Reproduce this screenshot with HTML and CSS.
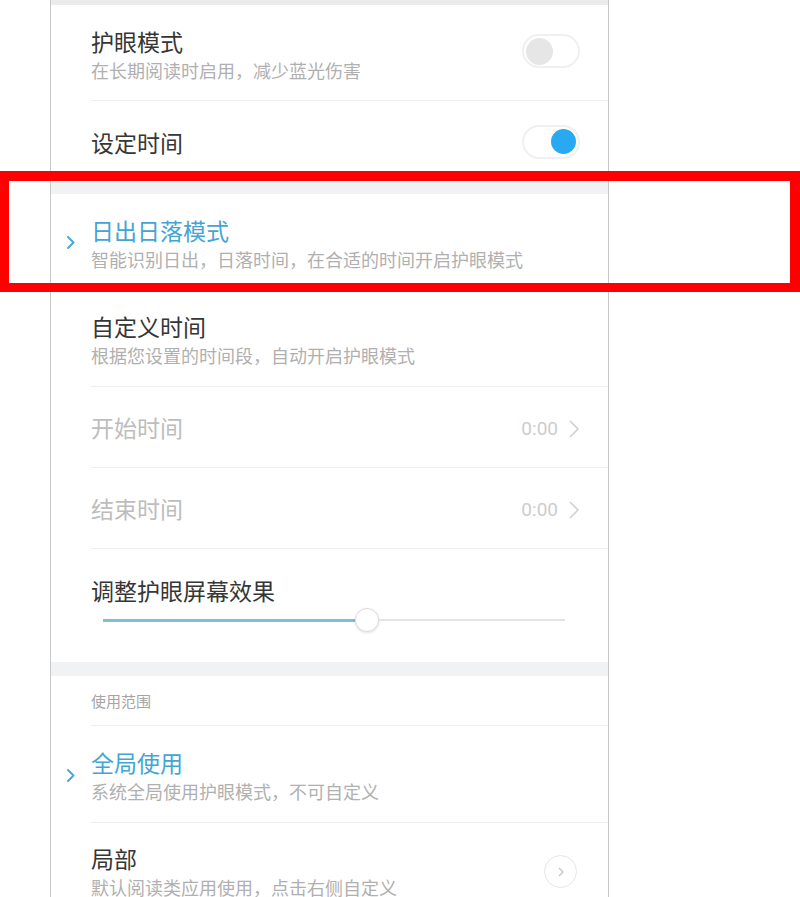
FILE: index.html
```html
<!DOCTYPE html>
<html lang="zh-CN">
<head>
<meta charset="utf-8">
<title>护眼模式</title>
<link rel="stylesheet" href="styles.css">
</head>
<body>
<div class="page">
  <div class="panel">
    <div class="band band-top"></div>

    <div class="row row-two row-a">
      <div class="text">
        <div class="title">护眼模式</div>
        <div class="sub">在长期阅读时启用，减少蓝光伤害</div>
      </div>
      <span class="switch"><span class="knob"></span></span>
    </div>

    <div class="row row-one row-b no-line">
      <div class="title">设定时间</div>
      <span class="switch on"><span class="knob"></span></span>
    </div>

    <div class="band band-mid"></div>

    <div class="row row-two row-a">
      <span class="pick"><svg width="10" height="15" viewBox="0 0 10 15"><polyline points="2,2 7.5,7.5 2,13" fill="none" stroke="#4aa8d8" stroke-width="2" stroke-linecap="round" stroke-linejoin="round"/></svg></span>
      <div class="text">
        <div class="title blue">日出日落模式</div>
        <div class="sub">智能识别日出，日落时间，在合适的时间开启护眼模式</div>
      </div>
    </div>

    <div class="row row-two row-c">
      <div class="text">
        <div class="title">自定义时间</div>
        <div class="sub">根据您设置的时间段，自动开启护眼模式</div>
      </div>
    </div>

    <div class="row row-one row-d">
      <div class="title dim">开始时间</div>
      <span class="value">0:00<svg width="12" height="20" viewBox="0 0 12 20"><polyline points="2,2 10,10 2,18" fill="none" stroke="#cfcfcf" stroke-width="1.6" stroke-linejoin="round"/></svg></span>
    </div>

    <div class="row row-one row-d">
      <div class="title dim">结束时间</div>
      <span class="value">0:00<svg width="12" height="20" viewBox="0 0 12 20"><polyline points="2,2 10,10 2,18" fill="none" stroke="#cfcfcf" stroke-width="1.6" stroke-linejoin="round"/></svg></span>
    </div>

    <div class="row row-slider no-line">
      <div class="title">调整护眼屏幕效果</div>
      <div class="slider">
        <div class="fill" style="width:252px"></div>
        <span class="thumb"></span>
        <div class="rest"></div>
      </div>
    </div>

    <div class="band band-low"></div>

    <div class="row row-head">
      <div class="head">使用范围</div>
    </div>

    <div class="row row-two row-c">
      <span class="pick"><svg width="10" height="15" viewBox="0 0 10 15"><polyline points="2,2 7.5,7.5 2,13" fill="none" stroke="#4aa8d8" stroke-width="2" stroke-linecap="round" stroke-linejoin="round"/></svg></span>
      <div class="text">
        <div class="title blue">全局使用</div>
        <div class="sub">系统全局使用护眼模式，不可自定义</div>
      </div>
    </div>

    <div class="row row-two row-e no-line">
      <div class="text text-e">
        <div class="title">局部</div>
        <div class="sub">默认阅读类应用使用，点击右侧自定义</div>
      </div>
      <span class="circle"><svg width="10" height="14" viewBox="0 0 10 14"><polyline points="3,3 7,7 3,11" fill="none" stroke="#c8c8c8" stroke-width="1.4" stroke-linejoin="round"/></svg></span>
    </div>
  </div>
  <div class="highlight"></div>
</div>
</body>
</html>
```

FILE: styles.css
```css
* { box-sizing: border-box; }

html, body {
  margin: 0;
  padding: 0;
  background: #ffffff;
  height: 897px;
  overflow: hidden;
}

body {
  font-family: "Noto Sans CJK SC", "Noto Sans", sans-serif;
  color: #3b3b3b;
}

.page {
  position: relative;
  width: 800px;
  height: 897px;
  overflow: hidden;
}

.panel {
  margin-left: 50px;
  width: 559px;
  height: 897px;
  border-left: 1px solid #c9c9c9;
  border-right: 1px solid #c9c9c9;
  background: #ffffff;
  display: flex;
  flex-direction: column;
}

.band { background: #f1f2f3; flex: none; }
.band-top { height: 5px; background: #ebebeb; }
.band-mid { height: 12px; }
.band-low { height: 14px; }

.row {
  flex: none;
  display: flex;
  align-items: center;
  margin-left: 40px;
  padding-right: 28px;
  border-bottom: 1px solid #efefef;
}
.row.no-line { border-bottom: none; }

.row-a { height: 96px; align-items: flex-start; }
.row-b { height: 81px; }
.row-c { height: 97px; align-items: flex-start; }
.row-d { height: 81px; }
.row-e { height: 100px; align-items: flex-start; }
.row-head { height: 50px; }
.row-slider {
  height: 113px;
  flex-direction: column;
  align-items: stretch;
  padding-top: 26px;
}

.text {
  flex: 1;
  padding-top: 21px;
}
.text-e { padding-top: 20px; }

.title {
  font-size: 23px;
  line-height: 30px;
  color: #363636;
  flex: 1;
}
.row-slider .title { flex: none; }
.title.blue { color: #42a5d6; }
.title.dim { color: #bdbdbd; }

.sub {
  font-size: 18px;
  line-height: 24px;
  color: #b0b0b0;
  margin-top: 2px;
}

.head {
  font-size: 15px;
  color: #a5a5a5;
}

.pick {
  flex: none;
  width: 25px;
  margin-left: -25px;
  align-self: center;
  display: flex;
  align-items: center;
  padding-top: 2px;
}

.switch {
  flex: none;
  position: relative;
  width: 58px;
  height: 34px;
  border: 2px solid #f0f0f0;
  border-radius: 17px;
  background: #ffffff;
  display: flex;
  align-items: center;
  padding: 0 2px;
  margin-top: 29px;
}
.row-b .switch { margin-top: 0; }
.switch .knob {
  width: 27px;
  height: 27px;
  border-radius: 50%;
  background: #e6e6e6;
}
.switch.on { justify-content: flex-end; padding-right: 2px; }
.switch.on .knob {
  width: 25px;
  height: 25px;
  background: #2aa9f3;
}

.value {
  flex: none;
  display: flex;
  align-items: center;
  gap: 10px;
  font-family: "Roboto", "Noto Sans", sans-serif;
  font-size: 19px;
  color: #cdcdcd;
  padding-top: 3px;
}

.slider {
  margin-top: 3px;
  margin-left: 12px;
  width: 462px;
  height: 24px;
  display: flex;
  align-items: center;
}
.slider .fill {
  height: 3px;
  background: #7dbfd6;
  flex: none;
}
.slider .thumb {
  flex: none;
  width: 24px;
  height: 24px;
  border-radius: 50%;
  background: #ffffff;
  border: 1px solid #dcdcdc;
  box-shadow: 0 1px 3px rgba(0,0,0,0.12);
}
.slider .rest {
  flex: 1;
  height: 2px;
  background: #e4e4e4;
}

.circle {
  flex: none;
  width: 33px;
  height: 33px;
  border-radius: 50%;
  border: 1.5px solid #e6e6e6;
  display: flex;
  align-items: center;
  justify-content: center;
  margin-top: 32px;
  margin-right: 3px;
}

.highlight {
  position: absolute;
  left: 0;
  top: 171px;
  width: 800px;
  height: 121px;
  border: 10px solid #ff0000;
  border-bottom-width: 9px;
  border-left-width: 9px;
}
```
